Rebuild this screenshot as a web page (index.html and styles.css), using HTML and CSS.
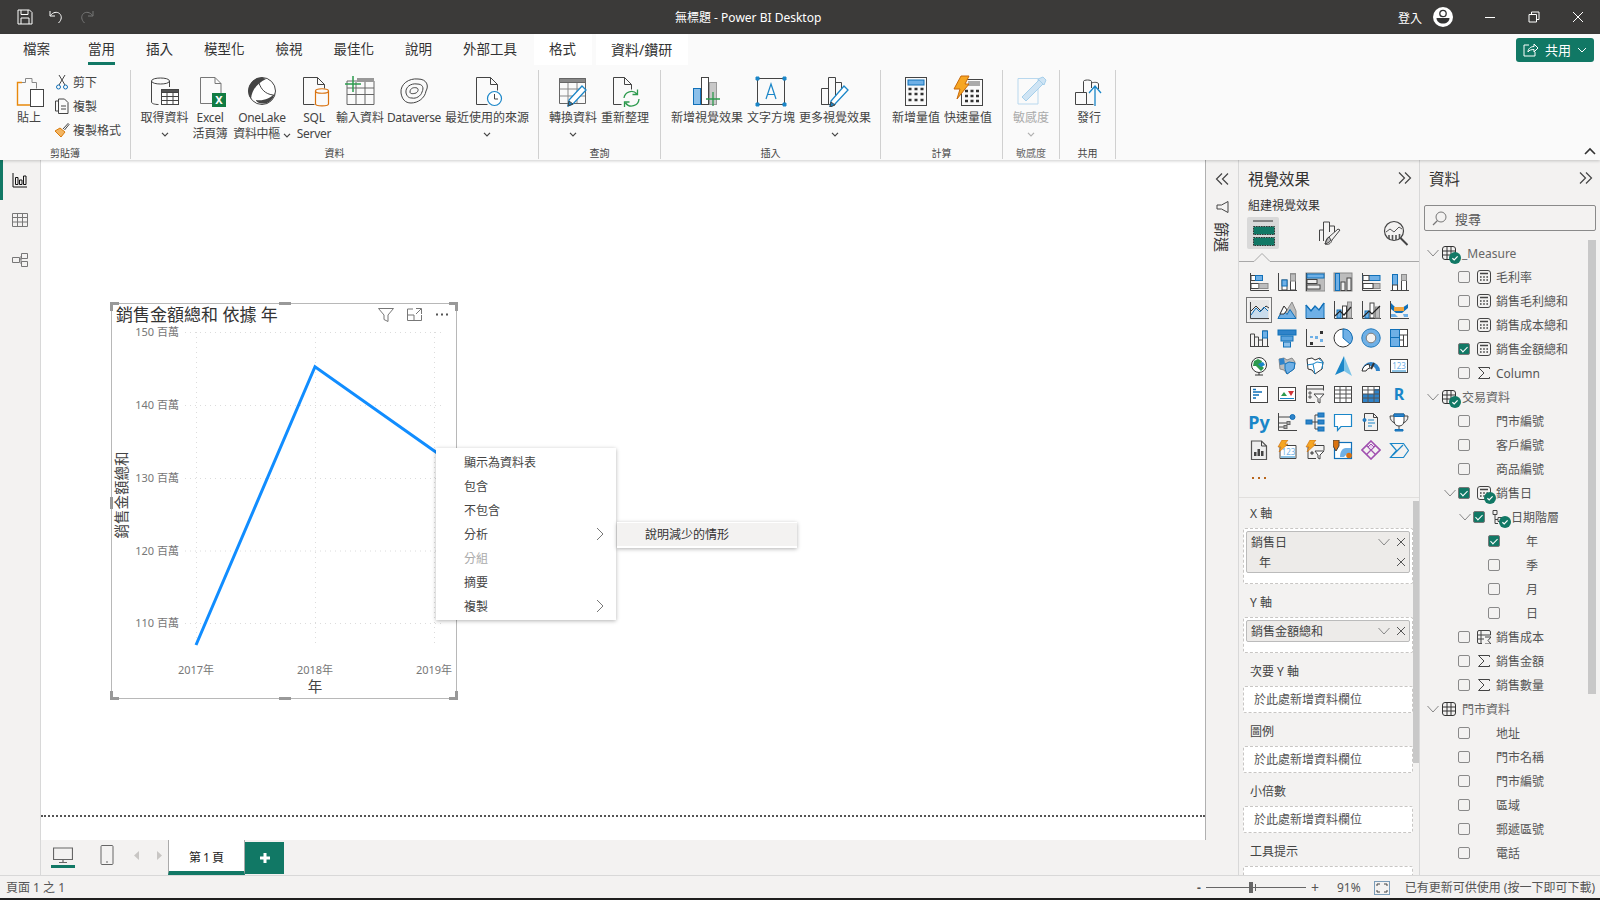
FILE: index.html
```html
<!DOCTYPE html>
<html lang="zh-Hant">

<head>
    <meta charset="UTF-8">
    <title>無標題 - Power BI Desktop</title>
    <link rel="stylesheet" href="styles.css">
</head>

<body>
    <svg class="defs">
        <symbol id="calc" viewBox="0 0 14 14"><rect x=".5" y=".5" width="13" height="13" rx="2.500" fill="none" stroke="#444"/><path d="M3 3.500h8" stroke="#444" stroke-width="1.500"/><path d="M3 7h1.600M6.200 7h1.600M9.400 7h1.600M3 10h1.600M6.200 10h1.600M9.400 10h1.600" stroke="#444" stroke-width="1.400"/></symbol>
        <symbol id="sigma" viewBox="0 0 14 14"><path d="M12.500 3V1.500H1.500l5.500 5.500-5.500 5.500h11V11" fill="none" stroke="#444"/></symbol>
        <symbol id="grid" viewBox="0 0 14 14"><rect x=".5" y=".5" width="13" height="13" rx="2.500" fill="none" stroke="#333"/><path d="M5 1v12M9 1v12M1 5h12M1 9h12" stroke="#333"/></symbol>
        <symbol id="badge" viewBox="0 0 12 12"><circle cx="6" cy="6" r="6" fill="#117865"/><path d="M3.400 6.200l1.800 1.700 3.400-3.600" fill="none" stroke="#fff" stroke-width="1.200"/></symbol>
        <symbol id="caret" viewBox="0 0 12 8"><path d="M.5 1l5.500 6 5.500-6" fill="none" stroke="#888"/></symbol>
        <symbol id="small-chev" viewBox="0 0 8 5"><path d="M1 .8L4 3.800 7 .8" fill="none" stroke="#444" stroke-width="1.200"/></symbol>
        <symbol id="x" viewBox="0 0 10 10"><path d="M1 1l8 8M9 1l-8 8" fill="none" stroke="#555"/></symbol>
        <symbol id="right" viewBox="0 0 8 14"><path d="M1 1l6 6-6 6" fill="none" stroke="#777"/></symbol>
        <symbol id="double-right" viewBox="0 0 14 12"><path d="M1 .5l5.500 5.500L1 11.500M7 .5L12.500 6 7 11.500" fill="none" stroke="#444" stroke-width="1.200"/></symbol>
    </svg>

    <div class="app">
        <!-- barra tytulowa -->
        <header class="titlebar">
            <div class="quick">
                <svg width="16" height="16" viewBox="0 0 16 16" class="light"><path d="M1 1h11.500L15 3.500V15H1zM4 1v4.500h7V1M4 15V9h8v6"/></svg>
                <svg width="16" height="16" viewBox="0 0 16 16" class="light"><path d="M2 2v5h5M2.500 6.500C5 3 9 2.500 11.500 4.500 14 7 14 10.500 10.500 14"/></svg>
                <svg width="16" height="16" viewBox="0 0 16 16" class="dim"><path d="M14 2v5H9M13.500 6.500C11 3 7 2.500 4.500 4.500 2 7 2 10.500 5.500 14"/></svg>
            </div>
            <div class="doc-title">無標題 - Power BI Desktop</div>
            <div class="account">
                <span>登入</span>
                <svg width="20" height="20" viewBox="0 0 20 20"><circle cx="10" cy="10" r="10" fill="#fff"/><circle cx="10" cy="6.500" r="3.200" fill="none" stroke="#333" stroke-width="1.300"/><path d="M3.500 11h13c0 3.500-3 5.500-6.500 5.500S3.500 14.500 3.500 11z" fill="#333"/></svg>
            </div>
            <div class="win-btns">
                <svg width="12" height="12" viewBox="0 0 12 12" class="light"><path d="M1 6.500h10"/></svg>
                <svg width="12" height="12" viewBox="0 0 12 12" class="light"><path d="M1 3.500h7.500V11H1zM3.500 3.500V1H11v7.500H8.500"/></svg>
                <svg width="12" height="12" viewBox="0 0 12 12" class="light"><path d="M1 1l10 10M11 1L1 11"/></svg>
            </div>
        </header>

        <!-- wstazka -->
        <section class="ribbon">
            <nav class="tabs">
                <div class="tab first">檔案</div>
                <div class="tab active">當用</div>
                <div class="tab">插入</div>
                <div class="tab">模型化</div>
                <div class="tab">檢視</div>
                <div class="tab">最佳化</div>
                <div class="tab">說明</div>
                <div class="tab">外部工具</div>
                <div class="tab ctx">格式</div>
                <div class="tab ctx wide">資料/鑽研</div>
                <div class="share">
                    <svg width="16" height="14" viewBox="0 0 16 14" class="light"><path d="M6 2H1v11h11V9M5 9c0-3.500 3-5.500 6-5.500V1l4 4-4 4V6.500C8.500 6.500 6 7 5 9z"/></svg>
                    <span>共用</span>
                    <svg width="10" height="6" viewBox="0 0 10 6" class="light"><path d="M1 1l4 4 4-4"/></svg>
                </div>
            </nav>
            <div class="groups">
                <div class="group g-clip">
                    <div class="items">
                        <div class="item w-36">
                            <svg class="ico" width="32" height="32" viewBox="0 0 32 32"><path d="M9 7.500H4.500v22.500H17" stroke="#e8890c" stroke-width="1.400"/><path d="M9 7.500h3.500V3.500h6.500v4h4.500v6" stroke="#888"/><rect x="17.500" y="14.500" width="13" height="17" fill="#fff"/></svg>
                            <span>貼上</span>
                        </div>
                        <div class="mini-list">
                            <div class="mini"><svg class="ico" width="14" height="16" viewBox="0 0 14 16"><path d="M4 1l6 10M10 1L4 11"/><circle cx="3.500" cy="13" r="2" stroke="#1170b8"/><circle cx="10.500" cy="13" r="2" stroke="#1170b8"/></svg><span>剪下</span></div>
                            <div class="mini"><svg class="ico" width="14" height="16" viewBox="0 0 14 16"><path d="M3 3H.5v10H3"/><path d="M3.500 1h6l3.500 3.500v11h-9.500zM6 8h5M6 11h5"/></svg><span>複製</span></div>
                            <div class="mini"><svg class="ico" width="16" height="16" viewBox="0 0 16 16"><path d="M1 9l6 6 4-5-5-4z" fill="#f3b562" stroke="#d97a0a"/><path d="M9 7l5-5.500 1 1L10.500 8" stroke="#444"/></svg><span>複製格式</span></div>
                        </div>
                    </div>
                    <div class="group-name">剪貼簿</div>
                </div>

                <div class="group g-data">
                    <div class="items">
                        <div class="item w-47">
                            <svg class="ico" width="32" height="32" viewBox="0 0 32 32"><path d="M2.500 27V6c0-4 18-4 18 0v6M2.500 6c0 4 18 4 18 0M2.500 27c0 1.500 3 2.500 7 2.500"/><rect x="12.500" y="14.500" width="17" height="15" fill="#fff"/><path d="M12.500 14.500h17v3h-17z" fill="#555"/><path d="M18 17v12M24 17v12M13 21.500h16M13 25.500h16"/></svg>
                            <span>取得資料</span>
                            <svg class="chev"><use href="#small-chev"/></svg>
                        </div>
                        <div class="item w-40">
                            <svg class="ico" width="32" height="32" viewBox="0 0 32 32"><path d="M21 2.500H6.500v26H18M21 2.500l6 6V18M21 2.500v6h6" stroke="#777"/><rect x="18" y="18" width="14" height="14" fill="#117c43" stroke="none"/><text x="25" y="29" class="xl">X</text></svg>
                            <span class="latin">Excel<br>活頁簿</span>
                        </div>
                        <div class="item w-60">
                            <svg width="32" height="32" viewBox="0 0 32 32"><circle cx="16" cy="16" r="13.500" fill="#fff" stroke="#444"/><path d="M16 2.500A13.500 13.500 0 0 0 5 24C6 14 12 8 20 4z" fill="#444"/><path d="M10 25c0 3 8 5 13 2 3-2 5-5 6-9-5 6-12 8-19 7z" fill="#444"/><path d="M13 8c2 6 6 11 14 12" fill="none" stroke="#444"/></svg>
                            <span class="latin">OneLake<br>資料中樞 <svg class="chev inline"><use href="#small-chev"/></svg></span>
                        </div>
                        <div class="item w-40">
                            <svg class="ico" width="32" height="32" viewBox="0 0 32 32"><path d="M5.500 2.500h14l7 7v4M19.500 2.500v7h7M5.500 2.500v27h11"/><path d="M17.500 16c0-3 13-3 13 0v13c0 2.500-13 2.500-13 0zM17.500 16c0 3 13 3 13 0" stroke="#d9720f" stroke-width="1.200"/></svg>
                            <span class="latin">SQL<br>Server</span>
                        </div>
                        <div class="item w-48">
                            <svg class="ico" width="32" height="32" viewBox="0 0 32 32"><path d="M3 6h27v23.500H3z" stroke="#666"/><path d="M13 3h17v4H13z" fill="#999" stroke="none"/><path d="M3 13h27M3 19.500h27M12 7v22M21 7v22" stroke="#666"/><path d="M9 1v16M1 9h16" stroke="#2d9a4e" stroke-width="1.500"/></svg>
                            <span>輸入資料</span>
                        </div>
                        <div class="item w-56">
                            <svg class="ico" width="32" height="32" viewBox="0 0 32 32"><path d="M3 18C2 9 11 3 20 4c9 0 11 7 8 12-1 7-8 12-15 12-6 0-9-4-10-10z"/><path d="M8 18c-1-6 5-10 11-9 6 0 7 4 5 8-1 4-6 7-10 6-4 0-5-2-6-5z"/><path d="M12 17c0-4 4-5 7-4 2 1 1 4-1 5-3 1-6 1-6-1z"/></svg>
                            <span class="latin">Dataverse</span>
                        </div>
                        <div class="item w-86">
                            <svg class="ico" width="32" height="32" viewBox="0 0 32 32"><path d="M5.500 2.500h14l7 7v6M19.500 2.500v7h7M5.500 2.500v27h11"/><circle cx="23.500" cy="23.500" r="7" stroke="#1a86c8" stroke-width="1.200" fill="#fff"/><path d="M23.500 19v5h3.500"/></svg>
                            <span>最近使用的來源</span>
                            <svg class="chev"><use href="#small-chev"/></svg>
                        </div>
                    </div>
                    <div class="group-name">資料</div>
                </div>

                <div class="group g-query">
                    <div class="items">
                        <div class="item w-48">
                            <svg class="ico" width="32" height="32" viewBox="0 0 32 32"><path d="M2.500 3.500h26v25h-26z" stroke="#666"/><path d="M2.500 3.500h26v4h-26z" fill="#888" stroke="#666"/><path d="M3 14h25M3 21h25M11 8v20M20 8v20" stroke="#888"/><path d="M11 31l1-6L25 11l4 4-13 14z" fill="#fff" stroke="#1a86c8" stroke-width="1.300"/><path d="M11 31l1-5 4 3z" fill="#1a86c8"/></svg>
                            <span>轉換資料</span>
                            <svg class="chev"><use href="#small-chev"/></svg>
                        </div>
                        <div class="item w-48">
                            <svg class="ico" width="32" height="32" viewBox="0 0 32 32"><path d="M4.500 2.500h11l7 7v5M15.500 2.500v7h7M4.500 2.500v27h8"/><path d="M15 23a7.500 7.500 0 0 1 13-4M30 24a7.500 7.500 0 0 1-13.500 4M28.500 14.500v5h-5M15.500 32v-5h5" stroke="#2d9a4e" stroke-width="1.300"/></svg>
                            <span>重新整理</span>
                        </div>
                    </div>
                    <div class="group-name">查詢</div>
                </div>

                <div class="group g-insert">
                    <div class="items">
                        <div class="item w-72">
                            <svg class="ico" width="32" height="32" viewBox="0 0 32 32"><rect x="2.500" y="13.500" width="7" height="16" fill="#8cc0ea" stroke="#1170b8"/><rect x="10.500" y="2.500" width="7" height="27" fill="#fff"/><rect x="18.500" y="7.500" width="7" height="22" fill="#c8c8c8" stroke="#999"/><path d="M22 17v14M15 24h14" stroke="#2d9a4e" stroke-width="1.300"/></svg>
                            <span>新增視覺效果</span>
                        </div>
                        <div class="item w-48">
                            <svg class="ico" width="32" height="32" viewBox="0 0 32 32"><rect x="2.500" y="3.500" width="27" height="26"/><path d="M1 2h3v3H1zM28 2h3v3h-3zM1 28h3v3H1zM28 28h3v3h-3z" fill="#1a86c8" stroke="#1a86c8"/><path d="M11 24l5-15 5 15M12.500 19.500h7" stroke="#1a86c8" stroke-width="1.200"/></svg>
                            <span>文字方塊</span>
                        </div>
                        <div class="item w-72">
                            <svg class="ico" width="32" height="32" viewBox="0 0 32 32"><path d="M2.500 29.500v-16h7v16zM9.500 29.500V2.500h7v27M16.500 7.500h6v9M2.500 29.500H16"/><path d="M11 32l1-6L25 11l4 4-13 14z" fill="#fff" stroke="#1a86c8" stroke-width="1.300"/><path d="M11 32l1-5 4 3z" fill="#1a86c8"/></svg>
                            <span>更多視覺效果</span>
                            <svg class="chev"><use href="#small-chev"/></svg>
                        </div>
                    </div>
                    <div class="group-name">插入</div>
                </div>

                <div class="group g-calc">
                    <div class="items">
                        <div class="item w-48">
                            <svg class="ico" width="32" height="32" viewBox="0 0 32 32"><rect x="5.500" y="2.500" width="21" height="28"/><rect x="8" y="5" width="16" height="5" fill="#6fb0e6" stroke="#1170b8"/><path d="M8.500 14h3M14.500 14h3M20.500 14h3M8.500 19h3M14.500 19h3M20.500 19h3M8.500 25h3M14.500 25h3M20.500 25h3" stroke="#333" stroke-width="2.500"/></svg>
                            <span>新增量值</span>
                        </div>
                        <div class="item w-48">
                            <svg class="ico" width="32" height="32" viewBox="0 0 32 32"><rect x="9.500" y="4.500" width="21" height="26"/><rect x="16" y="6" width="12" height="5" fill="#aaa" stroke="none"/><path d="M13 16h3M18.500 16h3M24 16h3M13 21h3M18.500 21h3M24 21h3M13 26h3M18.500 26h3M24 26h3" stroke="#333" stroke-width="2.500"/><path d="M9 1h8l-4 8h4L5 24l3-10H2z" fill="#f6a623" stroke="#c8690a"/></svg>
                            <span>快速量值</span>
                        </div>
                    </div>
                    <div class="group-name">計算</div>
                </div>

                <div class="group g-sens">
                    <div class="items">
                        <div class="item w-36 off">
                            <svg class="ico" width="32" height="32" viewBox="0 0 32 32"><path d="M3 3.500h20V29H3z" stroke="#b9d8ee"/><path d="M7 22l4 4L28 9l-4-4z" fill="#cfe4f4" stroke="#a6cfea"/><path d="M23 4l5-2 3 3-2 5z" fill="#cfe4f4" stroke="#a6cfea"/></svg>
                            <span>敏感度</span>
                            <svg class="chev"><use href="#small-chev"/></svg>
                        </div>
                    </div>
                    <div class="group-name off">敏感度</div>
                </div>

                <div class="group g-share">
                    <div class="items">
                        <div class="item w-36">
                            <svg class="ico" width="32" height="32" viewBox="0 0 32 32"><path d="M2.500 17.500h11v12h-11zM10.500 17V6.500c0-2 8-2 8 0V13M18.500 8c2-1 7-1 7 1v5M13.500 29.500h7"/><path d="M22 31V12M16 18l6-7 6 7" stroke="#1a86c8" stroke-width="1.300"/></svg>
                            <span>發行</span>
                        </div>
                    </div>
                    <div class="group-name">共用</div>
                </div>
                <svg class="collapse" width="12" height="8" viewBox="0 0 12 8"><path d="M1 7l5-5 5 5" fill="none" stroke="#333" stroke-width="1.600"/></svg>
            </div>
        </section>

        <main class="main">
            <aside class="rail">
                <div class="rail-btn current"><svg class="ico" width="16" height="16" viewBox="0 0 16 16"><path d="M1 1v14h14" stroke="#111"/><path d="M3.500 5.500h2.500v7H3.500zM7.500 8h2.500v4.500H7.500zM11.500 4h2.500v8.500h-2.500z" stroke="#111"/></svg></div>
                <div class="rail-btn"><svg class="ico" width="16" height="16" viewBox="0 0 16 16"><path d="M.5 1.500h15v13H.5zM.5 5.500h15M.5 10h15M5.500 1.500v13M10.500 1.500v13" stroke="#777"/></svg></div>
                <div class="rail-btn"><svg class="ico" width="16" height="16" viewBox="0 0 16 16"><path d="M.5 5.500h7v5h-7zM9.500 1.500h6v5h-6zM9.500 9.500h6v5h-6zM7.500 7h2M9 4v8" stroke="#777"/></svg></div>
            </aside>

            <div class="center">
                <div class="canvas">
                    <div class="page-end"></div>

                    <!-- wizualizacja na plotnie -->
                    <div class="visual">
                        <div class="visual-head">
                            <div class="visual-title">銷售金額總和 依據 年</div>
                            <div class="visual-tools">
                                <svg width="16" height="14" viewBox="0 0 16 14"><path d="M.5.500h15L10 7v6.500l-4-2V7z" fill="none" stroke="#777"/></svg>
                                <svg width="15" height="13" viewBox="0 0 15 13"><path d="M6 1H.5v11.500H14.500V7M.5 7H7v5.500M9 .5h5.500V6M14 1L9 6" fill="none" stroke="#777"/></svg>
                                <svg width="14" height="4" viewBox="0 0 14 4"><path d="M1 1.500h2M6 1.500h2M11 1.500h2" stroke="#555" stroke-width="2"/></svg>
                            </div>
                        </div>
                        <svg class="chart" width="344" height="372" viewBox="0 0 344 372">
                            <path class="gridline" d="M73 7.500H332M73 80.500H332M73 153.500H332M73 226H332M73 298.500H332M84.500 7V320M203.500 7V320M322.500 7V320"/>
                            <polyline class="series" points="84,320 203,41.700 322,125.700 340,138"/>
                            <text class="tick" x="67" y="10.500" text-anchor="end">150 百萬</text>
                            <text class="tick" x="67" y="83.500" text-anchor="end">140 百萬</text>
                            <text class="tick" x="67" y="156.500" text-anchor="end">130 百萬</text>
                            <text class="tick" x="67" y="229.500" text-anchor="end">120 百萬</text>
                            <text class="tick" x="67" y="301.500" text-anchor="end">110 百萬</text>
                            <text class="tick" x="84" y="349" text-anchor="middle">2017年</text>
                            <text class="tick" x="203" y="349" text-anchor="middle">2018年</text>
                            <text class="tick" x="322" y="349" text-anchor="middle">2019年</text>
                            <text class="axis-name" x="203" y="367" text-anchor="middle">年</text>
                            <text class="axis-name" text-anchor="middle" transform="translate(15 170) rotate(-90)">銷售金額總和</text>
                        </svg>
                        <i class="grip tl"></i><i class="grip tr"></i><i class="grip bl"></i><i class="grip br"></i>
                        <i class="bar top"></i><i class="bar bottom"></i><i class="bar side"></i>
                    </div>

                    <!-- menu kontekstowe -->
                    <div class="menu">
                        <div class="menu-row">顯示為資料表</div>
                        <div class="menu-row">包含</div>
                        <div class="menu-row">不包含</div>
                        <div class="menu-row">分析<svg width="8" height="14"><use href="#right"/></svg></div>
                        <div class="menu-row off">分組</div>
                        <div class="menu-row">摘要</div>
                        <div class="menu-row">複製<svg width="8" height="14"><use href="#right"/></svg></div>
                    </div>
                    <div class="submenu">
                        <div class="submenu-row">說明減少的情形</div>
                    </div>
                </div>

                <div class="pagebar">
                    <div class="view-btn on"><svg class="ico" width="20" height="16" viewBox="0 0 20 16"><path d="M.5 1h19v11.500H.5zM10 13v2.500M6 15.500h8" stroke="#666" stroke-width="1.200"/></svg></div>
                    <div class="view-btn phone"><svg class="ico" width="14" height="20" viewBox="0 0 14 20"><rect x="1" y=".5" width="12" height="19" rx="1" stroke="#666"/><path d="M6 17h2" stroke="#666"/></svg></div>
                    <div class="page-arrows">
                        <svg width="6" height="9" viewBox="0 0 6 9"><path d="M5 0v9L0 4.500z" fill="#c8c6c4"/></svg>
                        <svg width="6" height="9" viewBox="0 0 6 9"><path d="M1 0v9l5-4.500z" fill="#c8c6c4"/></svg>
                    </div>
                    <div class="page-tab">第 1 頁</div>
                    <div class="page-add"><svg width="12" height="12" viewBox="0 0 12 12"><path d="M6 1v10M1 6h10" stroke="#fff" stroke-width="3"/></svg></div>
                </div>
            </div>

            <aside class="filters">
                <svg class="flip" width="14" height="12"><use href="#double-right"/></svg>
                <svg class="funnel" width="13" height="12" viewBox="0 0 13 12"><path d="M12 .5v11L5.500 8H1V4h4.500z" fill="none" stroke="#444"/></svg>
                <div class="filters-name">篩選</div>
            </aside>

            <aside class="viz-pane">
                <div class="pane-head"><span>視覺效果</span><svg width="14" height="12"><use href="#double-right"/></svg></div>
                <div class="pane-sub">組建視覺效果</div>
                <div class="viz-tabs">
                    <div class="viz-tab on">
                        <svg width="26" height="26" viewBox="0 0 26 26"><path d="M3 1h20" stroke="#333"/><rect x="3.500" y="6.500" width="21" height="8" fill="#117865" stroke="#333" stroke-dasharray="1.500 1"/><rect x="3.500" y="17.500" width="21" height="8" fill="#117865" stroke="#333" stroke-dasharray="1.500 1"/></svg>
                    </div>
                    <div class="viz-tab">
                        <svg class="ico" width="24" height="26" viewBox="0 0 24 26"><path d="M1.500 21V10h4v11M5.500 14V2h6v10M11.500 6h5v6"/><path d="M7 24c3 1 6 0 7-4l8-10-2-1-9 8c-3 1-3 5-4 7z"/><path d="M7 24c3-1 5-2 6-4l-2-3c-2 1-3 5-4 7z" fill="#bbb"/></svg>
                    </div>
                    <div class="viz-tab">
                        <svg class="ico" width="26" height="26" viewBox="0 0 26 26"><circle cx="11" cy="11" r="9.500" stroke-width="1.200"/><path d="M17.500 18l7 7" stroke-width="2"/><path d="M3 12l4-3 4 3 5-5 3 2" stroke="#555"/><path d="M6 15v4M9.500 15v5M13 15v5M16.500 14v4" stroke="#555" stroke-width="1.600"/></svg>
                    </div>
                </div>
                <svg class="tab-notch" width="180" height="13" viewBox="0 0 180 13"><path d="M0 12.500H15L23 4.500 31 12.500H180" fill="none" stroke="#a8a8a8"/></svg>

                <div class="gallery">
                    <div class="gal"><svg class="ico" width="20" height="20" viewBox="0 0 20 20"><path d="M1.500 1v17.500H20"/><rect x="2" y="3.500" width="11" height="5" fill="#fff"/><rect class="b" x="6.500" y="3.500" width="7" height="5"/><rect x="2" y="11.500" width="8" height="5" fill="#fff"/><rect class="g" x="10" y="11.500" width="9" height="5"/></svg></div>
                    <div class="gal"><svg class="ico" width="20" height="20" viewBox="0 0 20 20"><path d="M1.500 1v17.500H20"/><rect x="5" y="8" width="5" height="10" fill="#fff"/><rect class="b" x="5" y="8" width="5" height="6"/><rect x="13.500" y="2" width="5" height="16" fill="#fff"/><rect class="g" x="13.500" y="2" width="5" height="7"/></svg></div>
                    <div class="gal"><svg class="ico" width="20" height="20" viewBox="0 0 20 20"><rect class="g" x="1" y="1" width="19" height="18"/><path d="M1.500 1v18"/><rect class="b" x="2" y="2" width="17" height="4"/><rect x="2" y="7.500" width="10" height="4" fill="#eee"/><rect x="2" y="13" width="13" height="4" fill="#eee"/></svg></div>
                    <div class="gal"><svg class="ico" width="20" height="20" viewBox="0 0 20 20"><rect class="g" x="1" y="1" width="18" height="18" stroke="none"/><rect class="b" x="2.500" y="1.500" width="4" height="17"/><rect x="8" y="10" width="4" height="8.500" fill="#eee"/><rect x="14" y="6" width="4" height="12.500" fill="#eee"/></svg></div>
                    <div class="gal"><svg class="ico" width="20" height="20" viewBox="0 0 20 20"><path d="M1.500 1v17.500H20"/><rect class="b" x="2" y="3.500" width="17" height="5"/><rect x="2" y="3.500" width="6" height="5" fill="#fff"/><rect class="g" x="12" y="11.500" width="7" height="5"/><rect x="2" y="11.500" width="10" height="5" fill="#fff"/></svg></div>
                    <div class="gal"><svg class="ico" width="20" height="20" viewBox="0 0 20 20"><path d="M1.500 18.500H20"/><rect class="b" x="3.500" y="2.500" width="5" height="16"/><rect x="3.500" y="13" width="5" height="5.500" fill="#fff"/><rect x="12.500" y="2.500" width="5" height="16" fill="#fff"/><rect class="g" x="12.500" y="2.500" width="5" height="6"/></svg></div>

                    <div class="gal picked"><svg class="ico" width="20" height="20" viewBox="0 0 20 20"><path d="M1.500 2v16.500H20"/><path d="M2 15l5-7 4 4 4-5 4 4V18H2z" fill="#c9dcec" stroke="none"/><path d="M2 11l5-5 5 5 5-5 3 2" stroke="#333"/><path d="M2 15l5-7 4 4 4-5 4 4" stroke="#1170b8"/></svg></div>
                    <div class="gal"><svg class="ico" width="20" height="20" viewBox="0 0 20 20"><path d="M1 18.500L7 6l3 4 5-8 4 9v7.500z" class="g"/><path d="M1 18.500l5-9 4 5 3-5 6 9z" class="b"/><path d="M3 14l4-8 3 4-3 4z" fill="#fff" stroke="#333"/></svg></div>
                    <div class="gal"><svg class="ico" width="20" height="20" viewBox="0 0 20 20"><path d="M1 5l5 6 4-5 4 4 5-7v15.500H1z" class="b"/><path d="M1 5l5 6 4-5 4 4 5-7" stroke="#1170b8" stroke-width="1.300"/><path d="M1 18.500h19" stroke="#333"/></svg></div>
                    <div class="gal"><svg class="ico" width="20" height="20" viewBox="0 0 20 20"><path d="M1.500 1v17.500H20"/><rect class="b" x="4" y="10" width="4" height="8"/><rect x="9.500" y="6" width="4" height="12" fill="#fff"/><rect class="g" x="14.500" y="2" width="4" height="16"/><path d="M2 16l5-5 4 4 7-8" stroke="#222" stroke-width="1.200"/></svg></div>
                    <div class="gal"><svg class="ico" width="20" height="20" viewBox="0 0 20 20"><path d="M1.500 1v17.500H20"/><rect class="b" x="4" y="11" width="4" height="7"/><rect x="9" y="3" width="4" height="15" fill="#fff"/><rect class="g" x="14.500" y="7" width="4" height="11"/><path d="M2 17l6-6 3 3 8-8" stroke="#222" stroke-width="1.200"/></svg></div>
                    <div class="gal"><svg class="ico" width="20" height="20" viewBox="0 0 20 20"><path d="M1.500 1v17.500H20"/><path d="M2 3l5 5 6 0 6-4v4l-6 5-6 0-5-4z" fill="#1170b8" stroke="none"/><path d="M5 7h10v4H5z" fill="#f3a53c" stroke="none"/><path d="M2 14h4l3 3H2zM14 14h5v3h-4z" fill="#6fb0e6" stroke="none"/></svg></div>

                    <div class="gal"><svg class="ico" width="20" height="20" viewBox="0 0 20 20"><path d="M1.500 18.500V6h4v12.500M5.500 18.500V9h4v9.500M9.500 18.500V12h4v-2M13.500 18.500V3h5v15.500M1 18.500h19"/><rect class="b" x="13.500" y="3" width="5" height="7"/></svg></div>
                    <div class="gal"><svg class="ico" width="20" height="20" viewBox="0 0 20 20"><rect x="1" y="2" width="18" height="5" fill="#2f83c9" stroke="#1170b8"/><rect x="4" y="8" width="12" height="5" fill="#5ca4de" stroke="#1170b8"/><rect x="6.500" y="14" width="7" height="5" fill="#8cc0ea" stroke="#1170b8"/></svg></div>
                    <div class="gal"><svg class="ico" width="20" height="20" viewBox="0 0 20 20"><path d="M1.500 1v17.500H20"/><path d="M5 14h3v3H5zM15 3h3v3h-3z" fill="#333" stroke="none"/><path d="M5 8h3v2H5zM10 8h3v3h-3zM15 11h3v3h-3z" fill="#6fb0e6" stroke="none"/></svg></div>
                    <div class="gal"><svg class="ico" width="20" height="20" viewBox="0 0 20 20"><circle cx="10" cy="10" r="9" fill="#fff" stroke="#333"/><path d="M10 1a9 9 0 0 1 7 15l-7-6z" fill="#6fb0e6" stroke="#1170b8"/></svg></div>
                    <div class="gal"><svg class="ico" width="20" height="20" viewBox="0 0 20 20"><circle cx="10" cy="10" r="7" fill="none" stroke="#6fb0e6" stroke-width="4"/><circle cx="10" cy="10" r="9.200" stroke="#1170b8"/><circle cx="10" cy="10" r="4.800" stroke="#777"/></svg></div>
                    <div class="gal"><svg class="ico" width="20" height="20" viewBox="0 0 20 20"><rect x="1.500" y="1.500" width="17" height="17" fill="#fff"/><rect class="b" x="1.500" y="1.500" width="9" height="8"/><rect class="b" x="1.500" y="9.500" width="9" height="9"/><path d="M10.500 7h8M14.500 7v11.500M10.500 12h4"/></svg></div>

                    <div class="gal"><svg class="ico" width="20" height="20" viewBox="0 0 20 20"><circle cx="10" cy="9" r="7.500" fill="#fff" stroke="#333"/><path d="M5 5l4-2 4 2-1 4 3 3-3 3-3-3-2-2-3 0z" fill="#2d9a4e" stroke="none"/><path d="M9 8l5-2 2 3-4 2z" fill="#1a86c8" stroke="none"/><path d="M6 19h8M10 17v2" stroke="#333"/></svg></div>
                    <div class="gal"><svg class="ico" width="20" height="20" viewBox="0 0 20 20"><path d="M2 3l5-1 3 2 5-2 3 4-1 7-7 5-3-4-4-1z" class="g"/><path d="M8 8l4-2 6 1-1 6-7 5-2-5z" class="b"/><path d="M2 3l5-1 1 6-5 1z" fill="#2f83c9" stroke="none"/></svg></div>
                    <div class="gal"><svg class="ico" width="20" height="20" viewBox="0 0 20 20"><path d="M2 3l5-1 3 2 5-2 3 4-1 7-7 5-3-4-4-1z" fill="#fff" stroke="#333"/><path d="M8 8l4-2 6 1M8 8l-6 1M8 8l2 10" stroke="#1a86c8"/><path d="M14 3l4 3-1 7" stroke="#1a86c8"/></svg></div>
                    <div class="gal"><svg width="20" height="20" viewBox="0 0 20 20"><path d="M11 0l8 20-8-5z" fill="#7cc4e8"/><path d="M11 0L2 19l9-4z" fill="#1a86c8"/></svg></div>
                    <div class="gal"><svg class="ico" width="20" height="20" viewBox="0 0 20 20"><path d="M1 15a9 9 0 0 1 18 0h-4a5 5 0 0 0-10 0z" fill="#2f83c9" stroke="none"/><path d="M1 15a9 9 0 0 1 7-7l1 4a5 5 0 0 0-4 3z" fill="#fff" stroke="#333"/><path d="M13 7l-3 6" stroke="#333" stroke-width="2"/></svg></div>
                    <div class="gal"><svg class="ico" width="20" height="20" viewBox="0 0 20 20"><rect x="1.500" y="3.500" width="17" height="13" fill="#fff"/><path d="M3 15h14" stroke="#1a86c8"/><text x="10" y="13" class="num">123</text></svg></div>

                    <div class="gal"><svg class="ico" width="20" height="20" viewBox="0 0 20 20"><rect x="1.500" y="2.500" width="17" height="16" fill="#fff"/><path d="M4 5.500h3M4 8h9M4 11h6M4 14h3" stroke="#1170b8" stroke-width="1.500"/></svg></div>
                    <div class="gal"><svg class="ico" width="20" height="20" viewBox="0 0 20 20"><rect x="1.500" y="3.500" width="17" height="13" fill="#fff"/><path d="M4 12l3-4 3 4z" fill="#2d9a4e" stroke="none"/><path d="M11 7h6l-3 5z" fill="#d13438" stroke="none"/><path d="M3 14.500h14" stroke="#1a86c8"/></svg></div>
                    <div class="gal"><svg class="ico" width="20" height="20" viewBox="0 0 20 20"><path d="M1.500 1.500h17v5M1.500 1.500v17H10M1.500 5h17"/><path d="M4 8h2v2H4zM4 12h2v2H4z" fill="#aaa" stroke="#666"/><path d="M9 10h10l-4 4.500V19l-2-1v-3.500z" fill="#fff"/></svg></div>
                    <div class="gal"><svg class="ico" width="20" height="20" viewBox="0 0 20 20"><rect x="1.500" y="2.500" width="17" height="16" fill="#fff"/><path d="M1.500 6h17M1.500 10h17M1.500 14h17M7 2.500v16M13 2.500v16" stroke="#555"/></svg></div>
                    <div class="gal"><svg class="ico" width="20" height="20" viewBox="0 0 20 20"><rect x="1.500" y="2.500" width="17" height="16" fill="#fff"/><path d="M2 10h16v8H2zM13 5h5v5h-5z" fill="#2f83c9" stroke="none"/><path d="M1.500 6h17M1.500 10h17M1.500 14h17M7 2.500v16M13 2.500v16" stroke="#555"/></svg></div>
                    <div class="gal"><span class="gal-text r">R</span></div>

                    <div class="gal"><span class="gal-text">Py</span></div>
                    <div class="gal"><svg class="ico" width="20" height="20" viewBox="0 0 20 20"><path d="M1.500 1v17.500H20M2 5h12M2 11h8M2 15h5"/><circle cx="15.500" cy="5" r="2.500" fill="#2f83c9" stroke="#1170b8"/><rect x="10" y="9.500" width="3" height="3" fill="#aaa" stroke="#666"/><rect x="7" y="13.500" width="3" height="3" fill="#aaa" stroke="#666"/></svg></div>
                    <div class="gal"><svg class="ico" width="20" height="20" viewBox="0 0 20 20"><rect x="1" y="8" width="6" height="4" fill="#2f83c9" stroke="#1170b8"/><rect x="13" y="1" width="6" height="4" fill="#2f83c9" stroke="#1170b8"/><rect x="13" y="8" width="6" height="4" fill="#2f83c9" stroke="#1170b8"/><rect x="13" y="15" width="6" height="4" fill="#2f83c9" stroke="#1170b8"/><path d="M7 10h6M10 3v14M10 3h3M10 17h3" stroke="#444"/></svg></div>
                    <div class="gal"><svg class="ico" width="20" height="20" viewBox="0 0 20 20"><path d="M1.500 2.500h17v12H8L4.500 18.500v-4h-3z" fill="#fff" stroke="#1a86c8" stroke-width="1.200"/></svg></div>
                    <div class="gal"><svg class="ico" width="20" height="20" viewBox="0 0 20 20"><path d="M3.500 1.500h9l4 4v13h-13zM12.500 1.500v4h4"/><circle cx="3.500" cy="8" r="1.500" fill="#2f83c9" stroke="#1170b8"/><path d="M7 8h6M7 11h7M7 14h4" stroke="#1a86c8"/></svg></div>
                    <div class="gal"><svg class="ico" width="20" height="20" viewBox="0 0 20 20"><path d="M5 2h10v7c0 3-2 5-5 5s-5-2-5-5z" fill="#fff"/><path d="M5 2h10v2.500H5z" fill="#2f83c9" stroke="#1170b8"/><path d="M5 4H1c0 4 2 6 5 7M15 4h4c0 4-2 6-5 7M10 14v3"/><path d="M6 17.500h8v1.500H6z" fill="#2f83c9" stroke="#1170b8"/></svg></div>

                    <div class="gal"><svg class="ico" width="20" height="20" viewBox="0 0 20 20"><path d="M2.500 1h10l5 5v13.500h-15z" fill="#eee" stroke="#555" stroke-width="1.200"/><path d="M12.500 1v5h5"/><path d="M5 16h2.500v-4H5zM8.500 16h2.500V9H8.500zM12 16h2.500v-5H12z" fill="#444" stroke="none"/></svg></div>
                    <div class="gal"><svg class="ico" width="20" height="20" viewBox="0 0 20 20"><path d="M3 5.500h16v13H3z" fill="#fff"/><path d="M4 17h14" stroke="#1a86c8"/><text x="11.500" y="15" class="num">123</text><path d="M5 0h6L8 4h3L2 12l2-5H1z" fill="#f6a623" stroke="#c8690a" stroke-width=".6"/></svg></div>
                    <div class="gal"><svg class="ico" width="20" height="20" viewBox="0 0 20 20"><path d="M3 5.500h16v5M3 5.500v13h8"/><path d="M6 12h2v2H6z" fill="#aaa"/><path d="M10 11h9l-4 4v4l-2-1v-3z" fill="#fff"/><path d="M5 0h6L8 4h3L2 12l2-5H1z" fill="#f6a623" stroke="#c8690a" stroke-width=".6"/></svg></div>
                    <div class="gal"><svg class="ico" width="20" height="20" viewBox="0 0 20 20"><rect x="1.500" y="2.500" width="17" height="16" fill="#fff" stroke="#1170b8" stroke-width="1.200"/><path d="M7 17c0-5 2-9 6-9h5v5h-3l-4 4z" fill="#6fb0e6" stroke="none"/><path d="M0 0h6v6l-3 5-3-5z" fill="#d9720f"/><circle cx="16" cy="15.500" r="2.800" fill="#d9720f" stroke="none"/></svg></div>
                    <div class="gal"><svg class="ico" width="20" height="20" viewBox="0 0 20 20"><path d="M10 1l9 9-9 9-9-9z" fill="none" stroke="#a050b0" stroke-width="1.600"/><path d="M5.500 5.500l9 9M14.500 5.500l-9 9" stroke="#a050b0" stroke-width="1.300"/><path d="M10 4l3 3-3 3-3-3z" fill="#e8d3ec" stroke="#a050b0"/></svg></div>
                    <div class="gal"><svg class="ico" width="20" height="20" viewBox="0 0 20 20"><path d="M1.500 3.500h13l5 7-5 7h-13l6-7z" fill="none" stroke="#1a86c8" stroke-width="1.200"/><path d="M4 15L14 5" stroke="#1a86c8" stroke-width="1.200"/></svg></div>
                    <div class="gal more"><svg width="16" height="4" viewBox="0 0 16 4"><path d="M1 2h2M7 2h2M13 2h2" stroke="#b8651b" stroke-width="2"/></svg></div>
                </div>

                <div class="wells">
                    <div class="pane-scroll"></div>
                    <div class="well-block">
                        <div class="well-label">X 軸</div>
                        <div class="well">
                            <div class="chip">
                                <div class="chip-row"><span>銷售日</span><svg class="chip-caret"><use href="#caret"/></svg><svg class="chip-x"><use href="#x"/></svg></div>
                                <div class="chip-row sub"><span>年</span><svg class="chip-x"><use href="#x"/></svg></div>
                            </div>
                            <div class="well-rest"></div>
                        </div>
                    </div>
                    <div class="well-block">
                        <div class="well-label">Y 軸</div>
                        <div class="well">
                            <div class="chip">
                                <div class="chip-row"><span>銷售金額總和</span><svg class="chip-caret"><use href="#caret"/></svg><svg class="chip-x"><use href="#x"/></svg></div>
                            </div>
                            <div class="well-rest"></div>
                        </div>
                    </div>
                    <div class="well-block">
                        <div class="well-label">次要 Y 軸</div>
                        <div class="well empty">於此處新增資料欄位</div>
                    </div>
                    <div class="well-block">
                        <div class="well-label">圖例</div>
                        <div class="well empty">於此處新增資料欄位</div>
                    </div>
                    <div class="well-block">
                        <div class="well-label">小倍數</div>
                        <div class="well empty">於此處新增資料欄位</div>
                    </div>
                    <div class="well-block">
                        <div class="well-label">工具提示</div>
                        <div class="well empty"></div>
                    </div>
                </div>
            </aside>

            <aside class="data-pane">
                <div class="pane-head"><span>資料</span><svg width="14" height="12"><use href="#double-right"/></svg></div>
                <div class="search">
                    <svg width="15" height="15" viewBox="0 0 15 15"><circle cx="9" cy="6" r="5" fill="none" stroke="#777"/><path d="M5.500 9.500L1 14" stroke="#777" stroke-width="1.300"/></svg>
                    <span>搜尋</span>
                </div>
                <div class="pane-scroll tree-scroll"></div>
                <div class="tree">
                    <div class="row tbl"><svg class="tw"><use href="#caret"/></svg><span class="ficon"><svg><use href="#grid"/></svg><svg class="badge"><use href="#badge"/></svg></span><span>_Measure</span></div>
                    <div class="row l1"><i class="cb"></i><span class="ficon"><svg><use href="#calc"/></svg></span><span>毛利率</span></div>
                    <div class="row l1"><i class="cb"></i><span class="ficon"><svg><use href="#calc"/></svg></span><span>銷售毛利總和</span></div>
                    <div class="row l1"><i class="cb"></i><span class="ficon"><svg><use href="#calc"/></svg></span><span>銷售成本總和</span></div>
                    <div class="row l1"><i class="cb on"></i><span class="ficon"><svg><use href="#calc"/></svg></span><span>銷售金額總和</span></div>
                    <div class="row l1"><i class="cb"></i><span class="ficon"><svg><use href="#sigma"/></svg></span><span>Column</span></div>

                    <div class="row tbl"><svg class="tw"><use href="#caret"/></svg><span class="ficon"><svg><use href="#grid"/></svg><svg class="badge"><use href="#badge"/></svg></span><span>交易資料</span></div>
                    <div class="row l1"><i class="cb"></i><span class="ficon"></span><span>門市編號</span></div>
                    <div class="row l1"><i class="cb"></i><span class="ficon"></span><span>客戶編號</span></div>
                    <div class="row l1"><i class="cb"></i><span class="ficon"></span><span>商品編號</span></div>
                    <div class="row l1c"><svg class="tw"><use href="#caret"/></svg><i class="cb on"></i><span class="ficon"><svg><use href="#calc"/></svg><svg class="badge"><use href="#badge"/></svg></span><span>銷售日</span></div>
                    <div class="row l2c"><svg class="tw"><use href="#caret"/></svg><i class="cb on"></i><span class="ficon"><svg viewBox="0 0 14 14"><path d="M1 .5h4v4H1zM6 7.500h4v4H6zM3 4.500v5h3M3 9.500v4h3" fill="none" stroke="#444"/></svg><svg class="badge"><use href="#badge"/></svg></span><span>日期階層</span></div>
                    <div class="row l3"><i class="cb on"></i><span class="ficon"></span><span>年</span></div>
                    <div class="row l3"><i class="cb"></i><span class="ficon"></span><span>季</span></div>
                    <div class="row l3"><i class="cb"></i><span class="ficon"></span><span>月</span></div>
                    <div class="row l3"><i class="cb"></i><span class="ficon"></span><span>日</span></div>
                    <div class="row l1"><i class="cb"></i><span class="ficon"><svg viewBox="0 0 14 14"><path d="M5 13.500H2A1.500 1.500 0 0 1 .5 12V2A1.500 1.500 0 0 1 2 .5h10A1.500 1.500 0 0 1 13.500 2v3M4 1v12M.5 5h13M.5 9H7M8 7h6l-3 3.500 3 3.500H8" fill="none" stroke="#444"/></svg></span><span>銷售成本</span></div>
                    <div class="row l1"><i class="cb"></i><span class="ficon"><svg><use href="#sigma"/></svg></span><span>銷售金額</span></div>
                    <div class="row l1"><i class="cb"></i><span class="ficon"><svg><use href="#sigma"/></svg></span><span>銷售數量</span></div>

                    <div class="row tbl"><svg class="tw"><use href="#caret"/></svg><span class="ficon"><svg><use href="#grid"/></svg></span><span>門市資料</span></div>
                    <div class="row l1"><i class="cb"></i><span class="ficon"></span><span>地址</span></div>
                    <div class="row l1"><i class="cb"></i><span class="ficon"></span><span>門市名稱</span></div>
                    <div class="row l1"><i class="cb"></i><span class="ficon"></span><span>門市編號</span></div>
                    <div class="row l1"><i class="cb"></i><span class="ficon"></span><span>區域</span></div>
                    <div class="row l1"><i class="cb"></i><span class="ficon"></span><span>郵遞區號</span></div>
                    <div class="row l1"><i class="cb"></i><span class="ficon"></span><span>電話</span></div>
                </div>
            </aside>
        </main>

        <footer class="status">
            <span>頁面 1 之 1</span>
            <div class="zoom">
                <span class="zoom-sign">-</span>
                <div class="slider"><i class="thumb"></i><i class="tick-mark"></i></div>
                <span class="zoom-sign plus">+</span>
                <span class="percent">91%</span>
                <svg width="16" height="14" viewBox="0 0 16 14"><rect x=".5" y=".5" width="15" height="13" fill="none" stroke="#7a9cb8"/><path d="M3 5V3h3M10 3h3v2M3 9v2h3M10 11h3V9" fill="none" stroke="#444"/></svg>
                <span class="update">已有更新可供使用 (按一下即可下載)</span>
            </div>
        </footer>
        <div class="edge"></div>
    </div>
</body>

</html>
```

FILE: styles.css
```css
* {
    box-sizing: border-box;
    margin: 0;
    padding: 0;
}

html,
body {
    width: 1600px;
    height: 900px;
    overflow: hidden;
    font-family: "Noto Sans", "Noto Sans CJK TC", sans-serif;
    font-size: 12px;
    color: #444;
    background-color: #f3f2f1;
}

.defs {
    display: none;
}

.app {
    display: flex;
    flex-direction: column;
    width: 1600px;
    height: 900px;
}

svg {
    display: block;
    flex: none;
}

.light path {
    fill: none;
    stroke: #fff;
}

.dim path {
    fill: none;
    stroke: #777;
}

.ico {
    fill: none;
    stroke: #444;
}

.ico .b {
    fill: #6fb0e6;
    stroke: #1170b8;
}

.ico .g {
    fill: #bdbdbd;
    stroke: #8a8a8a;
}

/* title bar */
.titlebar {
    display: flex;
    align-items: center;
    height: 34px;
    flex: none;
    background-color: #3b3a39;
    color: #fff;
}

.quick {
    display: flex;
    gap: 15px;
    width: 675px;
    padding-left: 17px;
}

.doc-title {
    padding-top: 2px;
    line-height: 16px;
}

.account {
    display: flex;
    align-items: center;
    gap: 11px;
    margin-left: auto;
}

.account span {
    padding-top: 2px;
}

.win-btns {
    display: flex;
    gap: 32px;
    margin-left: 31px;
    margin-right: 16px;
}

/* ribbon */
.ribbon {
    position: relative;
    z-index: 2;
    flex: none;
    height: 126px;
    background-color: #fafafa;
    box-shadow: 0 1px 3px rgba(0, 0, 0, .2);
}

.tabs {
    display: flex;
    height: 36px;
    padding-left: 7.500px;
}

.tab {
    position: relative;
    height: 31px;
    padding: 0 15.500px;
    font-size: 13.500px;
    line-height: 31px;
    color: #333;
}

.tab.first {
    margin-right: 7px;
}

.tab.active::after {
    content: "";
    position: absolute;
    left: 15.500px;
    right: 15.500px;
    bottom: 0;
    height: 3px;
    background-color: #117865;
}

.tab.ctx {
    margin-left: 1px;
    background-color: #fff;
}

.tab.wide {
    margin-left: 4px;
    font-size: 14px;
}

.share {
    display: flex;
    align-items: center;
    justify-content: center;
    gap: 6px;
    width: 78px;
    height: 24px;
    margin: 4px 6px 0 auto;
    border-radius: 3px;
    background-color: #117865;
    color: #fff;
    font-size: 13px;
    line-height: 24px;
}

.groups {
    position: relative;
    display: flex;
    height: 89px;
}

.group {
    display: flex;
    flex-direction: column;
    border-right: 1px solid #d0d0d0;
}

.group-name {
    height: 12px;
    font-size: 10px;
    line-height: 12px;
    text-align: center;
    color: #444;
}

.group-name.off {
    color: #666;
}

.items {
    flex: 1;
    display: flex;
    gap: 2px;
    padding-top: 5px;
}

.g-clip {
    width: 131px;
}

.g-clip .items {
    padding-left: 11px;
    gap: 7px;
}

.g-data {
    width: 408px;
}

.g-data .items {
    padding-left: 10px;
}

.g-query {
    width: 122px;
}

.g-query .items,
.g-insert .items {
    padding-left: 10px;
    gap: 4px;
}

.g-insert {
    width: 220px;
}

.g-calc {
    width: 122px;
}

.g-calc .items {
    padding-left: 11px;
    gap: 4px;
}

.g-sens {
    width: 57px;
}

.g-sens .items {
    padding-left: 10px;
}

.g-share {
    width: 56px;
}

.g-share .items {
    padding-left: 11px;
}

.item {
    display: flex;
    flex-direction: column;
    align-items: center;
    line-height: 16px;
    white-space: nowrap;
    text-align: center;
    color: #444;
}

.item > svg:first-child {
    margin-bottom: 3px;
}

.item.off {
    color: #aaa;
}

.latin {
    letter-spacing: -.3px;
}

.w-36 { width: 36px; }
.w-40 { width: 40px; }
.w-47 { width: 47px; }
.w-48 { width: 48px; }
.w-56 { width: 56px; }
.w-60 { width: 60px; }
.w-72 { width: 72px; }
.w-86 { width: 86px; }

.chev {
    width: 8px;
    height: 5px;
    margin-top: 6px;
}

.chev.inline {
    display: inline-block;
    margin-top: 0;
}

.item.off .chev {
    opacity: .4;
}

.xl {
    font-size: 11px;
    font-weight: 700;
    fill: #fff;
    stroke: none;
    text-anchor: middle;
}

.mini-list {
    display: flex;
    flex-direction: column;
    gap: 8px;
    margin-top: -1px;
}

.mini {
    display: flex;
    align-items: center;
    height: 16px;
    white-space: nowrap;
}

.mini svg {
    width: 16px;
    margin-right: 3px;
}

.collapse {
    position: absolute;
    right: 4px;
    bottom: 4px;
}

/* main row */
.main {
    flex: 1;
    display: flex;
    min-height: 0;
}

.rail {
    width: 41px;
    flex: none;
    border-right: 1px solid #d8d8d8;
}

.rail-btn {
    display: flex;
    align-items: center;
    justify-content: center;
    width: 40px;
    height: 40px;
}

.rail-btn.current {
    border-left: 3px solid #117865;
    padding-right: 3px;
}

.center {
    flex: 1;
    display: flex;
    flex-direction: column;
    min-width: 0;
}

.canvas {
    position: relative;
    flex: 1;
    background-color: #fff;
    border-right: 1px solid #b0b0b0;
}

.page-end {
    position: absolute;
    left: 0;
    right: 0;
    top: 655px;
    border-top: 2px dotted #555;
}

/* the visual sits on a free canvas */
.visual {
    position: absolute;
    left: 70px;
    top: 143px;
    width: 346px;
    height: 396px;
    border: 1px solid #b8b8b8;
}

.visual-head {
    display: flex;
    align-items: center;
    height: 21px;
    padding-left: 4px;
}

.visual-title {
    font-size: 17px;
    line-height: 20px;
    color: #333;
    white-space: nowrap;
}

.visual-tools {
    display: flex;
    align-items: center;
    gap: 13px;
    margin-left: auto;
    margin-right: 7px;
}

.chart {
    overflow: visible;
}

.gridline {
    fill: none;
    stroke: #dcdcdc;
    stroke-dasharray: 1 4;
}

.series {
    fill: none;
    stroke: #118dff;
    stroke-width: 3;
}

.tick {
    font-size: 11px;
    fill: #777;
}

.axis-name {
    font-size: 14.500px;
    fill: #444;
}

.grip {
    position: absolute;
    width: 9px;
    height: 9px;
    border: 0 solid #999;
}

.grip.tl {
    left: -2px;
    top: -2px;
    border-width: 3px 0 0 3px;
}

.grip.tr {
    right: -2px;
    top: -2px;
    border-width: 3px 3px 0 0;
}

.grip.bl {
    left: -2px;
    bottom: -2px;
    border-width: 0 0 3px 3px;
}

.grip.br {
    right: -2px;
    bottom: -2px;
    border-width: 0 3px 3px 0;
}

.bar {
    position: absolute;
    background-color: #999;
}

.bar.top,
.bar.bottom {
    left: 167px;
    width: 12px;
    height: 3px;
}

.bar.top {
    top: -2px;
}

.bar.bottom {
    bottom: -2px;
}

.bar.side {
    left: -2px;
    top: 193px;
    width: 3px;
    height: 12px;
}

.menu {
    position: absolute;
    left: 395px;
    top: 288px;
    width: 180px;
    padding: 2px 0;
    background-color: #fff;
    box-shadow: 0 1px 4px rgba(0, 0, 0, .3);
}

.menu-row {
    display: flex;
    align-items: center;
    justify-content: space-between;
    height: 24px;
    padding: 0 12px 0 28px;
    color: #444;
}

.menu-row.off {
    color: #aaa;
}

.submenu {
    position: absolute;
    left: 576px;
    top: 362px;
    width: 180px;
    height: 26px;
    padding-top: 1px;
    background-color: #fff;
    box-shadow: 0 1px 4px rgba(0, 0, 0, .3);
}

.submenu-row {
    height: 23px;
    padding-left: 28px;
    line-height: 23px;
    background-color: #f3f2f1;
    color: #333;
}

/* page tabs */
.pagebar {
    display: flex;
    height: 35px;
    flex: none;
}

.view-btn {
    display: flex;
    align-items: center;
    justify-content: center;
    width: 24px;
    margin-left: 10px;
    padding-bottom: 6px;
}

.view-btn.on {
    box-shadow: inset 0 -7px 0 #f3f2f1, inset 0 -10px 0 #117865;
}

.view-btn.phone {
    margin-left: 20px;
}

.page-arrows {
    display: flex;
    gap: 16px;
    margin-left: 15px;
    padding-top: 11px;
}

.page-tab {
    width: 77px;
    margin-left: 6px;
    border-left: 1px solid #aaa;
    border-right: 1px solid #aaa;
    border-bottom: 4px solid #117865;
    background-color: #fff;
    color: #222;
    line-height: 35px;
    word-spacing: -1px;
    text-align: center;
}

.page-add {
    display: flex;
    align-items: center;
    justify-content: center;
    width: 39px;
    height: 32px;
    margin-top: 2px;
    background-color: #117865;
}

/* collapsed filter strip */
.filters {
    display: flex;
    flex-direction: column;
    align-items: center;
    width: 33px;
    flex: none;
    padding-top: 13px;
    border-right: 1px solid #d8d8d8;
}

.flip {
    transform: scaleX(-1);
}

.funnel {
    margin-top: 16px;
}

.filters-name {
    margin-top: 9px;
    writing-mode: vertical-rl;
    text-orientation: sideways;
    font-size: 15px;
    line-height: 16px;
    color: #333;
}

/* panes */
.viz-pane,
.data-pane {
    position: relative;
    display: flex;
    flex-direction: column;
    flex: none;
    overflow: hidden;
}

.viz-pane {
    width: 181px;
    border-right: 1px solid #d8d8d8;
}

.data-pane {
    width: 180px;
}

.pane-head {
    display: flex;
    align-items: center;
    justify-content: space-between;
    height: 36px;
    margin-bottom: 2px;
    padding: 0 7px 0 9px;
    font-size: 15.500px;
    color: #333;
}

.pane-sub {
    height: 14px;
    padding-top: 1px;
    padding-left: 9px;
    line-height: 14px;
    color: #333;
}

.viz-tabs {
    display: flex;
    justify-content: space-between;
    height: 32px;
    margin-top: 5px;
    padding: 0 7px 0 8px;
}

.viz-tab {
    display: flex;
    align-items: center;
    justify-content: center;
    width: 32px;
    height: 32px;
}

.viz-tab.on {
    background-color: #d9d9d9;
    border-radius: 2px;
}

.gallery {
    display: grid;
    grid-template-columns: repeat(6, 28px);
    grid-auto-rows: 28px;
    padding: 6px 0 0 6px;
    height: 235px;
    flex: none;
}

.gal {
    display: flex;
    align-items: center;
    justify-content: center;
}

.gal.picked svg {
    outline: 1px solid #777;
    outline-offset: 2px;
    background-color: #e6e6e6;
}

.gal-text {
    font-size: 18px;
    font-weight: 700;
    color: #1a86c8;
    line-height: 20px;
}

.gal-text.r {
    font-size: 16px;
}

.num {
    font-size: 8px;
    fill: #6fb0e6;
    stroke: none;
    text-anchor: middle;
}

.wells {
    position: relative;
    flex: 1;
    min-height: 0;
    overflow: hidden;
    padding: 8px 0 0 4px;
    border-top: 1px solid #e1dfdd;
}

.pane-scroll {
    position: absolute;
    right: 0;
    top: 3px;
    width: 6px;
    height: 262px;
    background-color: #c8c8c8;
}

.well-block {
    width: 170px;
    margin-bottom: 11px;
}

.well-label {
    height: 16px;
    margin-bottom: 6px;
    padding-left: 7px;
    line-height: 16px;
    color: #444;
}

.well {
    border: 1px dashed #c8c6c4;
    border-radius: 2px;
    background-color: #fff;
}

.well.empty {
    height: 27px;
    padding-left: 10px;
    line-height: 25px;
    color: #555;
}

.chip {
    margin: 2px 2px 0;
    padding: 0 0 0 4px;
    border: 1px solid #bbb;
    border-radius: 2px;
    background-color: #edebe9;
}

.chip-row {
    display: flex;
    align-items: center;
    height: 20px;
    color: #444;
}

.chip-row span {
    flex: 1;
}

.chip-row.sub span {
    padding-left: 8px;
}

.chip-caret {
    width: 12px;
    height: 8px;
    margin-right: 6px;
}

.chip-x {
    width: 10px;
    height: 10px;
    margin-right: 3px;
}

.well-rest {
    height: 10px;
}

/* data pane */
.search {
    display: flex;
    align-items: center;
    gap: 8px;
    height: 26px;
    margin: 7px 4px 0;
    padding-left: 7px;
    border: 1px solid #8a8a8a;
    border-radius: 2px;
    font-size: 13px;
    color: #555;
}

.tree-scroll {
    right: 4px;
    top: 80px;
    width: 8px;
    height: 454px;
}

.tree {
    margin-top: 10px;
    overflow: hidden;
}

.row {
    display: flex;
    align-items: center;
    height: 24px;
    color: #555;
    white-space: nowrap;
}

.tw {
    width: 12px;
    height: 8px;
    margin-right: 2px;
}

.cb {
    flex: none;
    width: 12px;
    height: 12px;
    border: 1px solid #8a8a8a;
    border-radius: 2px;
    margin-right: 8px;
}

.cb.on {
    position: relative;
    background-color: #117865;
    border-color: #777;
}

.cb.on::after {
    content: "";
    position: absolute;
    left: 3px;
    top: 1px;
    width: 3px;
    height: 6px;
    border: solid #fff;
    border-width: 0 1px 1px 0;
    transform: rotate(45deg);
}

.ficon {
    position: relative;
    flex: none;
    width: 12px;
    height: 12px;
    margin-right: 6px;
}

.ficon > svg:first-child {
    width: 14px;
    height: 14px;
    margin: -1px;
}

.badge {
    position: absolute;
    left: 6px;
    top: 5px;
    width: 12px;
    height: 12px;
}

.tbl {
    padding-left: 7px;
}

.tbl .ficon {
    margin-left: 2px;
    margin-right: 7px;
}

.tbl span:last-child {
    color: #666;
}

.l1 {
    padding-left: 38px;
}

.l1c {
    padding-left: 24px;
}

.l2c {
    padding-left: 39px;
}

.l3 {
    padding-left: 68px;
}

/* status bar */
.status {
    display: flex;
    align-items: center;
    justify-content: space-between;
    flex: none;
    height: 23px;
    padding: 1px 5px 0 6px;
    border-top: 1px solid #d8d8d8;
    color: #555;
    line-height: 16px;
}

.zoom {
    display: flex;
    align-items: center;
}

.zoom-sign {
    width: 7px;
    margin-right: 2px;
    font-weight: 700;
}

.zoom-sign.plus {
    width: 10px;
    margin-left: 5px;
    margin-right: 0;
    font-size: 14px;
    font-weight: 400;
}

.slider {
    position: relative;
    width: 100px;
    height: 1px;
    background-color: #666;
}

.thumb {
    position: absolute;
    left: 43px;
    top: -5px;
    width: 4px;
    height: 11px;
    background-color: #666;
}

.tick-mark {
    position: absolute;
    left: 49px;
    top: -3px;
    width: 1px;
    height: 7px;
    background-color: #666;
}

.percent {
    margin: 0 13px 0 16px;
}

.update {
    margin-left: 15px;
}

.edge {
    flex: none;
    height: 2px;
    background-color: #1f1f1f;
}
```
